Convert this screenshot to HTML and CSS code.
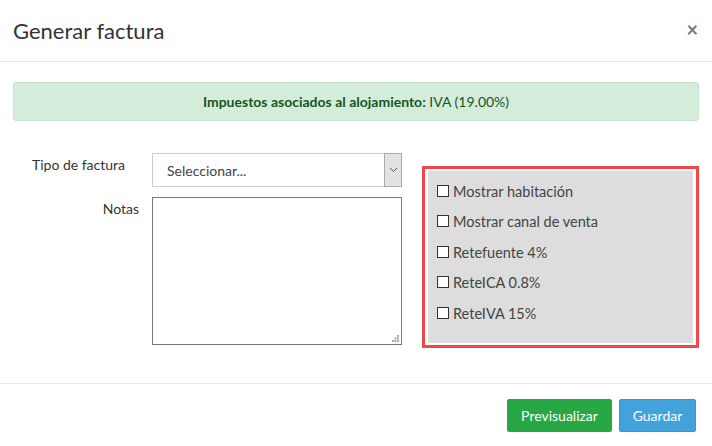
FILE: index.html
```html
<!DOCTYPE html>
<html>
  <head>
    <title>Generar factura</title>
    <link rel="stylesheet" href="styles.css">
  </head>
  <body>
    <div class="modal">
      <div class="modal-header">
        <h4 class="modal-title">Generar factura</h4>
        <span class="close">&times;</span>
      </div>
      <div class="modal-body">
        <div class="alert"><b>Impuestos asociados al alojamiento:</b> IVA (19.00%)</div>
        <div class="form-row">
          <div class="fields">
            <label class="label label-tipo" for="tipo">Tipo de factura</label>
            <div class="select">
              <span>Seleccionar...</span>
              <span class="select-arrow">
                <svg width="9" height="6" viewBox="0 0 9 6"><path d="M1 1l3.5 3.5L8 1" fill="none" stroke="#555" stroke-width="1"/></svg>
              </span>
            </div>
            <label class="label" for="notas">Notas</label>
            <div class="textarea" id="notas">
              <svg class="grip" width="7" height="7" viewBox="0 0 7 7"><g fill="#aaa"><rect x="5" y="0" width="2" height="2"/><rect x="2.5" y="2.5" width="2" height="2"/><rect x="5" y="2.5" width="2" height="2"/><rect x="0" y="5" width="2" height="2"/><rect x="2.5" y="5" width="2" height="2"/><rect x="5" y="5" width="2" height="2"/></g></svg>
            </div>
          </div>
          <div class="options">
            <div class="options-inner">
              <div class="check"><span class="box"></span>Mostrar habitación</div>
              <div class="check"><span class="box"></span>Mostrar canal de venta</div>
              <div class="check"><span class="box"></span>Retefuente 4%</div>
              <div class="check"><span class="box"></span>ReteICA 0.8%</div>
              <div class="check"><span class="box"></span>ReteIVA 15%</div>
            </div>
          </div>
        </div>
      </div>
      <div class="modal-footer">
        <button class="btn btn-green">Previsualizar</button>
        <button class="btn btn-blue">Guardar</button>
      </div>
    </div>
  </body>
</html>
```

FILE: styles.css
```css
body {
  margin: 0;
  font-family: Lato, "Open Sans", sans-serif;
  font-size: 14px;
  color: #333;
  background-color: #fff;
}
.modal {
  width: 712px;
  height: 446px;
  background-color: #fff;
}
.modal-header {
  display: flex;
  justify-content: space-between;
  align-items: center;
  height: 62px;
  padding: 0 14px 0 13px;
  border-bottom: 1px solid #e5e5e5;
  box-sizing: border-box;
}
.modal-title {
  margin: 0;
  font-size: 22px;
  font-weight: normal;
  color: #333;
}
.close {
  font-size: 20px;
  font-weight: bold;
  color: #777;
  line-height: 1;
  margin-top: -4px;
}
.modal-body {
  padding: 20px 13px 0 13px;
  height: 321px;
  box-sizing: border-box;
}
.alert {
  height: 39px;
  line-height: 37px;
  box-sizing: border-box;
  border: 1px solid #c3e6cb;
  border-radius: 3px;
  background-color: #d4edda;
  color: #155724;
  text-align: center;
  font-size: 14px;
}
.form-row {
  display: flex;
  margin-top: 32px;
}
.fields {
  display: grid;
  grid-template-columns: 126px 250px;
  column-gap: 13px;
  row-gap: 10px;
  align-content: start;
}
.label {
  text-align: right;
  padding-top: 3px;
  color: #333;
}
.label-tipo {
  padding-right: 14px;
}
.select {
  display: flex;
  justify-content: space-between;
  align-items: stretch;
  height: 34px;
  box-sizing: border-box;
  border: 1px solid #ccc;
  color: #444;
}
.select span:first-child {
  align-self: center;
  padding-left: 14px;
}
.select-arrow {
  display: flex;
  align-items: center;
  justify-content: center;
  width: 16px;
  background-color: #e2e2e2;
  border: 1px solid #aaa;
  margin: -1px -1px -1px 0;
}
.textarea {
  position: relative;
  height: 148px;
  box-sizing: border-box;
  border: 1px solid #777;
}
.grip {
  position: absolute;
  right: 2px;
  bottom: 2px;
}
.options {
  margin: 13px 0 0 20px;
  width: 283px;
  height: 182px;
  box-sizing: border-box;
  border: 3px solid #f44646;
  padding: 2px 3px;
}
.options-inner {
  height: 100%;
  background-color: #dddddd;
  padding: 5px 9px 0 9px;
  box-sizing: border-box;
}
.check {
  display: flex;
  align-items: center;
  height: 30.5px;
  font-size: 14.5px;
  color: #444;
}
.box {
  width: 9px;
  height: 9px;
  border: 1.5px solid #333;
  background-color: #fff;
  margin-right: 4px;
  margin-top: -1px;
  flex: none;
  width: 10px;
  height: 10px;
}
.modal-footer {
  display: flex;
  justify-content: flex-end;
  gap: 7px;
  border-top: 1px solid #e5e5e5;
  padding: 15px 16px 0 0;
}
.btn {
  height: 33px;
  padding: 0 12px;
  border: 1px solid transparent;
  border-radius: 2px;
  font-family: Lato, "Open Sans", sans-serif;
  font-size: 14px;
  color: #fff;
}
.btn-green {
  background-color: #28a745;
  border-color: #28a745;
  width: 105px;
}
.btn-blue {
  background-color: #42a2dc;
  border-color: #3a96d0;
  width: 77px;
}
```
